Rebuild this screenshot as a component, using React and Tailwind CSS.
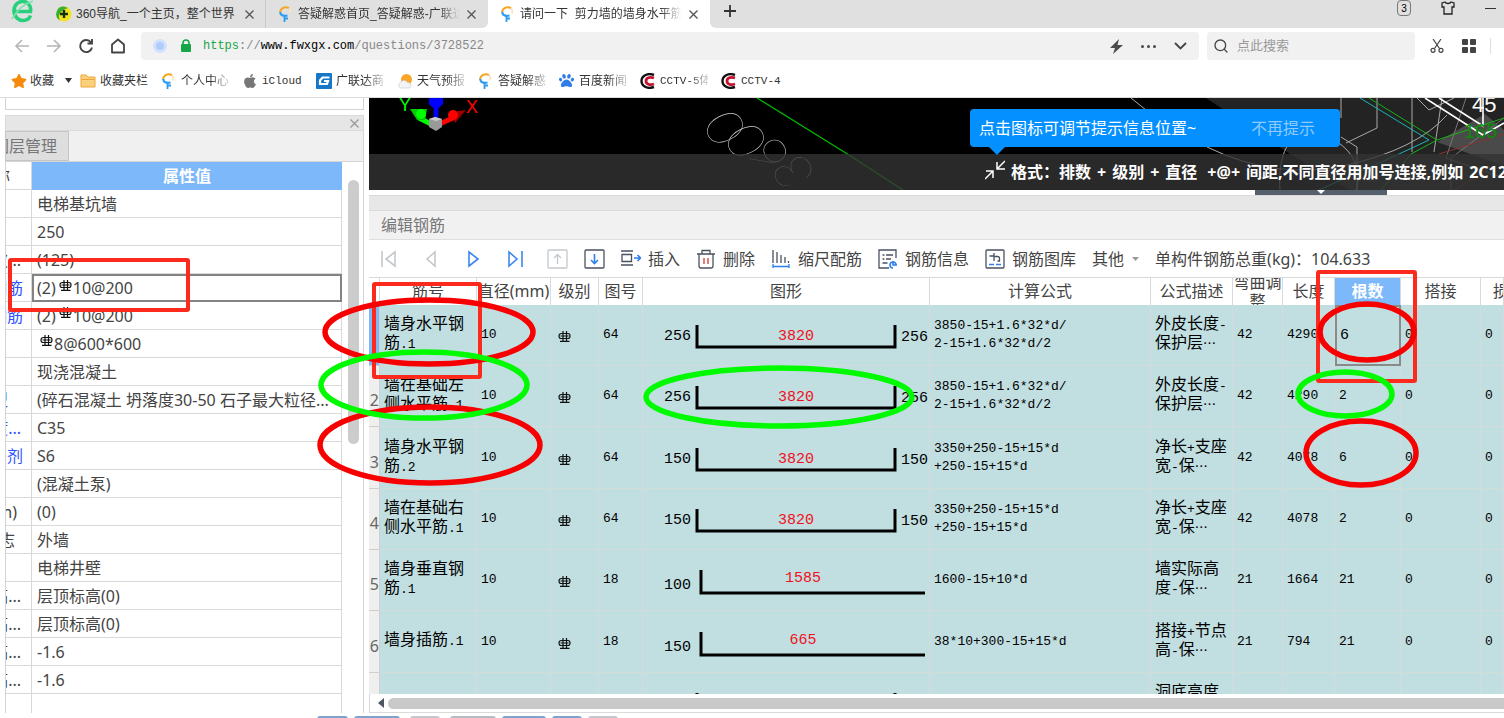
/**
 * Browser window with a rebar editing workspace: property panel on the left,
 * 3D view and rebar table on the right, review marks drawn on top.
 */
import { Search } from 'lucide-react';
import { FaApple, FaPaw, FaStar } from 'react-icons/fa';

const PROPS = [
  { value: '电梯基坑墙' },
  { value: '250' },
  { label: '皮...', pad: 'pr-[10px]', value: '(125)' },
  { label: '钢筋', pad: 'pr-[8px]', blue: true, prefix: '(2)', value: '10@200', rebar: true, selected: true },
  { label: '钢筋', pad: 'pr-[8px]', blue: true, prefix: '(2)', value: '10@200', rebar: true },
  { prefix: '', value: '8@600*600', rebar: true },
  { value: '现浇混凝土' },
  { label: '类型', pad: 'pr-[23px]', blue: true, value: '(碎石混凝土 坍落度30-50 石子最大粒径...' },
  { label: '度...', pad: 'pr-[10px]', blue: true, value: 'C35' },
  { label: '加剂', pad: 'pr-[8px]', blue: true, value: 'S6' },
  { value: '(混凝土泵)' },
  { label: '(mm)', pad: 'pr-[14px]', value: '(0)' },
  { label: '标志', pad: 'pr-[16px]', value: '外墙' },
  { value: '电梯井壁' },
  { label: '高...', pad: 'pr-[10px]', value: '层顶标高(0)' },
  { label: '高...', pad: 'pr-[10px]', value: '层顶标高(0)' },
  { label: '高...', pad: 'pr-[10px]', value: '-1.6' },
  { label: '高...', pad: 'pr-[10px]', value: '-1.6' },
];

const BARS = [
  { name: ['墙身水平钢', '筋.1'], fig: 64, side: 256, len: 3820, formula: ['3850-15+1.6*32*d/', '2-15+1.6*32*d/2'], desc: ['外皮长度-', '保护层…'], bend: 42, total: 4290, count: 6 },
  { name: ['墙在基础左', '侧水平筋.1'], fig: 64, side: 256, len: 3820, formula: ['3850-15+1.6*32*d/', '2-15+1.6*32*d/2'], desc: ['外皮长度-', '保护层…'], bend: 42, total: 4290, count: 2 },
  { name: ['墙身水平钢', '筋.2'], fig: 64, side: 150, len: 3820, formula: ['3350+250-15+15*d', '+250-15+15*d'], desc: ['净长+支座', '宽-保…'], bend: 42, total: 4078, count: 6 },
  { name: ['墙在基础右', '侧水平筋.1'], fig: 64, side: 150, len: 3820, formula: ['3350+250-15+15*d', '+250-15+15*d'], desc: ['净长+支座', '宽-保…'], bend: 42, total: 4078, count: 2 },
  { name: ['墙身垂直钢', '筋.1'], fig: 18, side: 100, len: 1585, formula: ['1600-15+10*d'], desc: ['墙实际高', '度-保…'], bend: 21, total: 1664, count: 21 },
  { name: ['墙身插筋.1'], fig: 18, side: 150, len: 665, formula: ['38*10+300-15+15*d'], desc: ['搭接+节点', '高-保…'], bend: 21, total: 794, count: 21 },
];

const HEADS = ['', '筋号', '直径(mm)', '级别', '图号', '图形', '计算公式', '公式描述', '弯曲调整', '长度', '根数', '搭接', '损耗'];
const COLS = ['w-[11px]', 'w-[97px]', 'w-[74px]', 'w-[48px]', 'w-[44px]', 'w-[287px]', 'w-[221px]', 'w-[82px]', 'w-[50px]', 'w-[52px]', 'w-[66px]', 'w-[80px]', 'w-auto'];

const BOOKMARKS = [
  { icon: 'folder', text: '收藏夹栏' },
  { icon: 'g', text: '个人中心', fade: true },
  { icon: 'apple', text: 'iCloud', narrow: true },
  { icon: 'gld', text: '广联达商', fade: true },
  { icon: 'weather', text: '天气预报', fade: true },
  { icon: 'g', text: '答疑解惑', fade: true },
  { icon: 'paw', text: '百度新闻', fade: true },
  { icon: 'cctv', text: 'CCTV-5体', fade: true },
  { icon: 'cctv', text: 'CCTV-4' },
];

const UI = "font-['Noto_Sans','Noto_Sans_CJK_SC',sans-serif]";
const SONG = "font-['Liberation_Sans','Noto_Sans_CJK_SC',sans-serif]";
const MONO = "font-['Liberation_Mono','Noto_Sans_CJK_SC',monospace]";

function GIcon() {
  return (
    <svg width="14" height="16" viewBox="0 0 14 16" fill="none" className="shrink-0">
      <path d="M11 2.200C7 -.2 2 2.500 2.200 6.500" stroke="#f5a623" strokeWidth="2" />
      <path d="M2.200 6C2.400 9 5 10.600 9.500 9.500" stroke="#2b9cf2" strokeWidth="2.200" />
      <path d="M11 2.200C13 4 12.500 6 12 7.500" stroke="#fbe3b8" strokeWidth="1.500" />
      <path d="M6.500 10v6M6.500 12.500h3.500" stroke="#2b9cf2" strokeWidth="1.800" />
    </svg>
  );
}

function BookmarkIcon({ kind }) {
  if (kind === 'g') return <GIcon />;
  if (kind === 'apple') return <FaApple size={16} color="#777" className="shrink-0" />;
  if (kind === 'paw') {
    return (
      <span className="relative flex">
        <FaPaw size={15} color="#2f7de9" />
      </span>
    );
  }
  if (kind === 'folder') {
    return (
      <svg width="16" height="16" viewBox="0 0 16 16" className="shrink-0">
        <path d="M1 2h5l2 2h7v10H1z" fill="#fbd07c" stroke="#eda637" />
        <path d="M1.500 6.500h13" stroke="#eda637" />
      </svg>
    );
  }
  if (kind === 'gld') {
    return (
      <svg width="16" height="16" viewBox="0 0 16 16" className="shrink-0">
        <rect width="16" height="16" rx="1" fill="#1677c9" />
        <path d="M13.500 4.500H6.500L4 7.500v3.500h7l1-3H8" fill="none" stroke="#fff" strokeWidth="2.200" />
      </svg>
    );
  }
  if (kind === 'weather') {
    return (
      <svg width="16" height="16" viewBox="0 0 16 16" className="shrink-0">
        <circle cx="9.500" cy="6.500" r="5.500" fill="#f9a62b" />
        <path d="M3.500 15a3 3 0 0 1 0-5.500 4 4 0 0 1 7 0 3 3 0 0 1 2 5.500z" fill="#f4f4f6" stroke="#c9ccd2" strokeWidth=".7" />
      </svg>
    );
  }
  return (
    <svg width="15" height="16" viewBox="0 0 15 16" fill="none" className="shrink-0">
      <path d="M14 2C7-.5 1.500 3 1.500 8s5.500 8.500 12.500 6" stroke="#111" strokeWidth="2.400" />
      <path d="M14 5C9.500 3.500 6 5 6 8s3.500 4.500 8 3" stroke="#c8102e" strokeWidth="2.800" />
    </svg>
  );
}

function CloseX({ size = 9, color = '#555' }) {
  return (
    <svg width={size} height={size} viewBox="0 0 9 9" className="shrink-0" stroke={color} strokeWidth="1.300">
      <path d="M.5.5l8 8M8.500.5l-8 8" />
    </svg>
  );
}

function Tab({ icon, title, active, rounded, fade }) {
  return (
    <div className={`flex w-[222px] shrink-0 items-center gap-1 pl-3 ${active ? 'bg-white' : 'bg-[#e0e0e0]'} ${rounded ? 'rounded-br-md' : 'border-r border-[#c9c9c9]'}`}>
      <span className="flex w-4 shrink-0">{icon}</span>
      <span className={`w-[165px] shrink-0 overflow-hidden text-xs whitespace-nowrap text-[#333] ${fade ? '[mask-image:linear-gradient(to_right,black_85%,transparent_98%)]' : ''}`}>{title}</span>
      <button aria-label="关闭标签" className="flex"><CloseX /></button>
    </div>
  );
}

function BrowserChrome() {
  return (
    <header className={`shrink-0 ${SONG}`}>
      <div className="flex h-7 overflow-hidden bg-white">
        <div className="w-11 shrink-0 bg-[#e0e0e0] pl-[11px]">
          <svg width="24" height="24" viewBox="0 0 24 24" fill="none">
            <path d="M3 11.500h16.500C20.500 5 16 1 11 1.500 5.500 2 2.500 6.500 3 12c.5 5 4.500 8.500 9 8.500 4 0 6.500-2 7.500-5" stroke="#27d07c" strokeWidth="3.600" />
            <path d="M1 19C5 12 12 4 22 1" stroke="#7be3ae" strokeWidth="1.500" />
          </svg>
        </div>
        <Tab
          title="360导航_一个主页，整个世界"
          icon={(
            <svg width="16" height="16" viewBox="0 0 16 16">
              <circle cx="8" cy="8" r="7.500" fill="#f7e31c" />
              <path d="M8 .5a7.500 7.500 0 0 0-4 14C1 9 5 4 12 2z" fill="#3aae2f" />
              <path d="M8 4v8M4 8h8" stroke="#11330f" strokeWidth="2.400" />
            </svg>
          )}
        />
        <Tab title="答疑解惑首页_答疑解惑-广联达" icon={<GIcon />} rounded fade />
        <Tab title={'请问一下\u00a0\u00a0剪力墙的墙身水平筋'} icon={<GIcon />} active rounded fade />
        <div className="flex flex-1 items-start rounded-bl-md bg-[#e0e0e0] pl-[14px]">
          <button aria-label="新标签" className="mt-[5px]">
            <svg width="12" height="12" viewBox="0 0 12 12" stroke="#333" strokeWidth="1.800"><path d="M6 0v12M0 6h12" /></svg>
          </button>
          <div className="ml-auto flex items-start gap-[30px] pr-2">
            <button className="flex h-4 w-[14px] items-center justify-center rounded-sm border border-[#777] text-[10px] text-black">3</button>
            <button aria-label="皮肤" className="mt-px">
              <svg width="14" height="14" viewBox="0 0 14 14" fill="none" stroke="#222" strokeWidth="1.300"><path d="M4 1L1 2v4h2v7h8V6h2V2l-3-1c-1 2-5 2-6 0z" /></svg>
            </button>
            <button aria-label="最小化" className="mt-2 h-px w-[11px] bg-[#333]" />
          </div>
        </div>
      </div>

      <div className="flex h-9 items-center bg-white pl-[14px]">
        <div className="flex w-[127px] shrink-0 items-center gap-4">
          <button aria-label="后退">
            <svg width="16" height="14" viewBox="0 0 16 14" fill="none" stroke="#b5b5b5" strokeWidth="1.600"><path d="M15 7H2M8 1L2 7l6 6" /></svg>
          </button>
          <button aria-label="前进">
            <svg width="16" height="14" viewBox="0 0 16 14" fill="none" stroke="#b5b5b5" strokeWidth="1.600"><path d="M1 7h13M8 1l6 6-6 6" /></svg>
          </button>
          <button aria-label="刷新">
            <svg width="16" height="16" viewBox="0 0 16 16" fill="none" stroke="#444" strokeWidth="1.900"><path d="M13 4.500A6 6 0 1 0 14 9.500M14 1v4.500H9.500" /></svg>
          </button>
          <button aria-label="主页">
            <svg width="16" height="16" viewBox="0 0 16 16" fill="none" stroke="#444" strokeWidth="1.800"><path d="M2 14.500V6.500L8 1.500l6 5v8z" strokeLinejoin="round" /></svg>
          </button>
        </div>
        <div className="flex h-7 min-w-0 flex-1 items-center rounded bg-[#f1f1f1] pr-3 pl-3">
          <span className="h-[14px] w-[14px] rounded-full border-[3px] border-[#d3e1fd] bg-[#b3cbfb]" />
          <svg width="12" height="14" viewBox="0 0 12 14" className="ml-[13px]">
            <rect x="1" y="5" width="10" height="8" rx="1" fill="#15a745" />
            <path d="M3 6V4a3 3 0 0 1 6 0v2" fill="none" stroke="#15a745" strokeWidth="1.600" />
          </svg>
          <span className={`ml-[11px] text-xs whitespace-nowrap text-[#888] ${MONO}`}>
            <span className="text-[#1ba64a]">https</span>://<span className="text-black">www.fwxgx.com</span>/questions/3728522
          </span>
          <div className="ml-auto flex items-center gap-[18px]">
            <button aria-label="极速模式">
              <svg width="13" height="15" viewBox="0 0 13 15" fill="#4a4a4a"><path d="M9 0L0 9h5l-2 6 10-9H7.500z" /></svg>
            </button>
            <button aria-label="更多" className="flex gap-[3px]">
              <i className="h-[3px] w-[3px] rounded-full bg-[#4a4a4a]" />
              <i className="h-[3px] w-[3px] rounded-full bg-[#4a4a4a]" />
              <i className="h-[3px] w-[3px] rounded-full bg-[#4a4a4a]" />
            </button>
            <button aria-label="展开">
              <svg width="13" height="8" viewBox="0 0 13 8" fill="none" stroke="#444" strokeWidth="1.800"><path d="M1 1l5.500 5.500L12 1" /></svg>
            </button>
          </div>
        </div>
        <label className="ml-2 flex h-7 w-[208px] shrink-0 items-center gap-2 rounded bg-[#f1f1f1] px-[6px]">
          <Search size={16} color="#444" strokeWidth={2} className="shrink-0" />
          <input aria-label="搜索" placeholder="点此搜索" className="w-full min-w-0 bg-transparent text-[13px] outline-none placeholder:text-[#999]" />
        </label>
        <div className="flex w-[89px] shrink-0 items-center gap-[18px] pl-[15px]">
          <button aria-label="截图">
            <svg width="14" height="14" viewBox="0 0 14 14" fill="none" stroke="#444" strokeWidth="1.200">
              <path d="M3 0l6.500 9.500M11 0L4.500 9.500" /><circle cx="3" cy="11.300" r="2" /><circle cx="11" cy="11.300" r="2" />
            </svg>
          </button>
          <button aria-label="应用" className="grid grid-cols-2 gap-[2px]">
            <i className="h-[6px] w-[6px] rounded-[1px] bg-[#444]" /><i className="h-[6px] w-[6px] rounded-[1px] bg-[#444]" />
            <i className="h-[6px] w-[6px] rounded-[1px] bg-[#444]" /><i className="h-[6px] w-[6px] rounded-[1px] bg-[#444]" />
          </button>
          <span className="-ml-1 h-4 w-px bg-[#ddd]" />
        </div>
      </div>

      <nav className="flex h-[34px] items-center border-b border-[#dcdcdc] bg-white pl-[11px] text-xs text-[#333]">
        <button className="flex w-[69px] shrink-0 items-center">
          <FaStar size={16} color="#f58a0b" />
          <span className="ml-[3px]">收藏</span>
          <svg width="7" height="5" viewBox="0 0 7 5" className="ml-[11px]"><path d="M0 0h7L3.500 5z" fill="#333" /></svg>
        </button>
        {BOOKMARKS.map((b, i) => (
          <a key={i} href="#bookmark" className={`flex shrink-0 items-center gap-1 ${b.narrow ? 'w-[74px]' : 'w-[81px]'}`}>
            <span className="flex w-4 shrink-0"><BookmarkIcon kind={b.icon} /></span>
            <span className={`w-12 overflow-hidden whitespace-nowrap ${/^[iC]/.test(b.text) ? `text-[11px] leading-4 ${MONO}` : ''} ${b.fade ? '[mask-image:linear-gradient(to_right,black_60%,transparent_110%)]' : ''}`}>{b.text}</span>
          </a>
        ))}
      </nav>
    </header>
  );
}

// Grade symbol: a ring crossed by two bars over a base line
function RebarMark({ className }) {
  return (
    <svg width="13" height="12" viewBox="0 0 13 12" fill="none" stroke="#111" strokeWidth="1.200" className={className}>
      <path d="M3.500 2.500H10q2 0 2 2.500t-2 2.500H3Q1 7.500 1 5t2.500-2.500M5 0v11M8.500 0v11M2 10.400h9.500M2.500 5h8" />
    </svg>
  );
}

function PropertyPanel() {
  return (
    <aside className={`ml-[5px] flex w-[359px] shrink-0 flex-col overflow-hidden text-base text-[#444] ${UI}`}>
      <div className="h-3 shrink-0 border-r border-b border-l border-[#d4d4d4]" />
      <div className="mt-[5px] flex h-4 shrink-0 items-center justify-end border border-[#dadada] bg-[#e6e6e6] pr-1">
        <button aria-label="关闭面板"><CloseX color="#999" /></button>
      </div>
      <div className="flex h-[31px] shrink-0 border-r border-b border-[#d4d4d4] bg-[#f0f0f0]">
        <button className="flex w-16 items-center justify-end overflow-hidden border border-[#c6c6c6] bg-[#dedede] pr-[11px] whitespace-nowrap text-[#777]"><span className="shrink-0">图层管理</span></button>
      </div>
      <div className="flex flex-1 border-x border-b border-[#d4d4d4]">
        <table className="w-[336px] shrink-0 table-fixed border-separate border-spacing-0">
          <colgroup><col className="w-[26px]" /><col /></colgroup>
          <thead>
            <tr className="h-7">
              <th className="border-r border-b border-[#d9d9d9] p-0 font-normal">
                <div className="flex h-6 justify-end overflow-hidden pr-[21px] whitespace-nowrap"><span className="shrink-0">名称</span></div>
              </th>
              <th className="bg-[#7db8fb] p-0 font-bold text-white">属性值</th>
            </tr>
          </thead>
          <tbody>
            {PROPS.map((p, i) => (
              <tr key={i} className="h-7">
                <td className="border-r border-b border-[#d9d9d9] p-0">
                  <div className={`flex h-6 justify-end overflow-hidden whitespace-nowrap ${p.pad ?? ''} ${p.blue ? 'text-[#2b50ff]' : ''}`}><span className="shrink-0">{p.label}</span></div>
                </td>
                <td className={`p-0 whitespace-nowrap ${p.selected ? 'border-2 border-[#838383]' : 'border-r border-b border-[#d9d9d9]'}`}>
                  <div className={`flex h-6 items-center ${p.selected ? 'pl-[3px]' : 'pl-[5px]'}`}>
                    {p.prefix}
                    {p.rebar && <RebarMark className="mr-px mb-[5px] ml-[3px]" />}
                    {p.value}
                  </div>
                </td>
              </tr>
            ))}
            <tr className="h-[19px]">
              <td className="border-r border-[#d9d9d9] p-0" />
              <td className="border-r border-[#d9d9d9] p-0" />
            </tr>
          </tbody>
        </table>
        <div className="flex-1 pt-[18px] pl-[6px]">
          <div className="h-[264px] w-[11px] rounded-full bg-[#ccc]" />
        </div>
      </div>
    </aside>
  );
}

function ModelView() {
  return (
    <div className="relative h-[92px] shrink-0 overflow-hidden bg-black">
      <svg className="absolute inset-0 h-full w-full" fill="none">
        <path d="M837 0l84 56 60 36h154V0z" fill="#232323" />
        <path d="M1068 44l48-28 19 16v36z" fill="#4a4a4a" />
        {/* axis gizmo */}
        <path d="M66 28L50 20" stroke="#0f0" strokeWidth="5" />
        <path d="M66 28l18-8" stroke="red" strokeWidth="5" />
        <path d="M67 24V4" stroke="#00f" strokeWidth="5" />
        <path d="M41 11l17 0-2 11-8 0z" fill="#0c0" /><circle cx="52" cy="16" r="5" fill="#0f0" />
        <path d="M97 12l-15 2 4 11z" fill="#900" /><circle cx="84" cy="17" r="5" fill="red" />
        <path d="M60 0h14v6l-4 4h-6l-4-4z" fill="#00f" />
        <path d="M60 21l6-2 7 2v8l-6 4-7-4z" fill="#999" /><path d="M60 21l7 2 6-2-7-2z" fill="#ccc" />
        <text x="30" y="13" fill="#0f0" fontSize="18" fontFamily="Liberation Sans">Y</text>
        <text x="97" y="15" fill="red" fontSize="18" fontFamily="Liberation Sans">X</text>
        {/* beam edges and dimension */}
        <path d="M388 0l92 57 54 35" stroke="#0b0" strokeWidth="1.300" />
        <text x="447 422 400 379" y="79 62 48 35" rotate="243" fill="#ccc" fontSize="52" fontWeight="100" fontFamily="Lato">3600</text>
        <g stroke="#aaa">
          <path d="M762 0l20 16M838 49q70 34 140 18t100-50M972 0v20M1008 0v30l-31 15M911 92c-4-60 30-65 50-52 26 12 32 36 26 52M972 39l16 10v43M1043 0v54M1073 0l-8 54M1048 0l12 12 25-12" />
          <path d="M1097 0l-20 60 58 20M1082 92V60l53-40" stroke="#777" />
        </g>
        <path d="M991 0l69 42-30 14-80 36" stroke="#1cb5b5" />
        <path d="M1000 0l68 42-26 14-30 36M1135 20l-67 22" stroke="#18b018" />
        <path d="M1056 0l58 37 21-12M1070 0l44 28V0" stroke="#fff" strokeWidth="1.600" />
        <path d="M1070 56l65-20M1085 92l50-30" stroke="#833" />
        <text x="1103" y="14" fill="#fff" fontSize="22" fontFamily="Liberation Sans">45</text>
        <text x="1095" y="40" fill="#0a8a0a" fontSize="20" fontFamily="Liberation Sans">165</text>
      </svg>
      <div className="absolute inset-x-0 bottom-0 h-9 overflow-hidden bg-[#333]/80">
        <p className={`ml-[616px] flex h-9 items-center gap-[6px] text-base font-bold whitespace-nowrap text-white ${UI}`}>
          <svg width="20" height="20" viewBox="0 0 20 20" fill="none" stroke="#fff" strokeWidth="1.500" className="mb-1 shrink-0">
            <path d="M20 1l-8 8M12 2v7h8M0 19l8-8M1 11h7v7" />
          </svg>
          <span>格式：排数</span>
          <span>+</span>
          <span>级别</span>
          <span>+</span>
          <span>直径</span>
          <span className="ml-1">+@+</span>
          <span>间距,不同直径用加号连接,例如</span>
          <span>2C12@200</span>
        </p>
      </div>
      <div className={`absolute top-[11px] left-[601px] flex h-[38px] w-[370px] items-center justify-between rounded bg-[#0590ff] pr-[25px] pl-[9px] text-base text-white ${UI}`}>
        <span>点击图标可调节提示信息位置~</span>
        <button className="text-[#8dcbff]">不再提示</button>
        <span className="absolute top-[38px] left-[19px] h-2 w-4 bg-[#0590ff] [clip-path:polygon(0_0,100%_0,50%_100%)]" />
      </div>
    </div>
  );
}

function ToolButton({ label, children }) {
  return (
    <button className="flex shrink-0 items-center gap-[7px] whitespace-nowrap">
      <svg width="20" height="20" viewBox="0 0 20 20" fill="none" stroke="#4a5260" strokeWidth="1.300">{children}</svg>
      {label}
    </button>
  );
}

function NavButton({ label, color, d }) {
  return (
    <button aria-label={label} className="shrink-0">
      <svg width="16" height="18" viewBox="0 0 16 18" fill="none" stroke={color} strokeWidth="1.600"><path d={d} /></svg>
    </button>
  );
}

function Toolbar() {
  return (
    <div className={`flex h-[38px] shrink-0 items-center gap-4 overflow-hidden border-b border-[#dadada] bg-white pl-3 text-base whitespace-nowrap text-[#444] ${UI}`}>
      <div className="mr-2 flex gap-[26px]">
        <NavButton label="首条" color="#c4c8cd" d="M1 1v16M14 2v14L5 9z" />
        <NavButton label="上一条" color="#c4c8cd" d="M12 2v14L4 9z" />
        <NavButton label="下一条" color="#3b86f0" d="M4 2v14l9-7z" />
        <NavButton label="末条" color="#3b86f0" d="M15 1v16M2 2v14l8-7z" />
      </div>
      <button aria-label="上移" className="shrink-0">
        <svg width="21" height="20" viewBox="0 0 21 20" fill="none" stroke="#c4c8cd" strokeWidth="1.300"><rect x="1" y="1" width="19" height="18" rx="1" /><path d="M10.500 15V6M7 9l3.500-3.500L14 9" /></svg>
      </button>
      <button aria-label="下移" className="shrink-0">
        <svg width="21" height="20" viewBox="0 0 21 20" fill="none" stroke="#4a5260" strokeWidth="1.300"><rect x="1" y="1" width="19" height="18" rx="1" /><path d="M10.500 5v9M7 11l3.500 3.500L14 11" stroke="#2f7fee" strokeWidth="1.600" /></svg>
      </button>
      <ToolButton label="插入">
        <path d="M0 2h12M0 16h12M1 5.500h9.500v7H1z" /><path d="M13 9h6M16.500 6l3 3-3 3" stroke="#2f7fee" strokeWidth="1.600" />
      </ToolButton>
      <ToolButton label="删除">
        <path d="M1 5h18M6 5V1.500h8V5M3 5v12q0 2 2 2h10q2 0 2-2V5" /><path d="M8 9v6M12 9v6" stroke="#d33" />
      </ToolButton>
      <ToolButton label="缩尺配筋">
        <path d="M2 1v13M6 3v11M10 6v8M14 8v6M17.500 12v2" /><path d="M2 17.500h16M2 15v4M18 15v4" stroke="#2f7fee" />
      </ToolButton>
      <ToolButton label="钢筋信息">
        <path d="M18 9V1H1v18h10M4.500 6h2M8 6h7M4.500 10h2M8 10h5M4.500 14h5" /><path d="M15 19a3 3 0 1 1 3-3M15 12v4h4" stroke="#2f7fee" strokeWidth="1.600" />
      </ToolButton>
      <ToolButton label="钢筋图库">
        <rect x="1" y="1" width="18" height="18" rx="1" /><path d="M4.500 7H9V4M9 4v8M9 7.500h3.500q2 0 2 2V12h-2" /><path d="M4 15.500h5M11 15.500h5" stroke="#2f7fee" />
      </ToolButton>
      <button className="flex shrink-0 items-center gap-2">
        其他
        <svg width="7" height="4" viewBox="0 0 7 4"><path d="M0 0h7L3.500 4z" fill="#999" /></svg>
      </button>
      <span>单构件钢筋总重(kg)：104.633</span>
    </div>
  );
}

// Latin runs sit narrower than the Chinese characters around them
function Mixed({ lines }) {
  return lines.map((line) => (
    <div key={line}>
      {line.split(/([\u4e00-\u9fff]+)/).filter(Boolean).map((part, i) => (
        <span key={i} className={/[\u4e00-\u9fff]/.test(part) ? 'text-base leading-[18px]' : 'text-[13px] leading-[18px]'}>{part.replace('…', '⋯')}</span>
      ))}
    </div>
  ));
}

function BarShape({ bar }) {
  const hooked = bar.fig === 64;
  return (
    <svg width="286" height="60" viewBox="0 0 286 60" className="block" fontFamily="Liberation Mono" fontSize="15">
      <path d={hooked ? 'M54 20v22h198V20' : 'M58 20v23h224'} fill="none" stroke="#000" strokeWidth="3" />
      <text x="48" y={hooked ? 35 : 39} textAnchor="end">{bar.side}</text>
      <text x={hooked ? 153 : 160} y={hooked ? 35 : 32} textAnchor="middle" fill="#f01020">{bar.len}</text>
      {hooked && <text x="258" y="36">{bar.side}</text>}
    </svg>
  );
}

function BarTable() {
  const cell = 'border-r border-b border-[#d2dddb] p-0 pl-1';
  return (
    <div className="h-[416px] shrink-0 overflow-hidden">
      <table className="w-full table-fixed border-separate border-spacing-0">
        <colgroup>{COLS.map((c, i) => <col key={i} className={c} />)}</colgroup>
        <thead>
          <tr className={`h-[27px] text-base text-[#444] ${UI}`}>
            {HEADS.map((h) => (
              <th key={h} className={`border-r border-[#dadada] p-0 ${h === '根数' ? 'bg-[#7db8fb] font-bold text-white' : 'bg-white font-normal'}`}>
                <div className={`flex h-[27px] items-center overflow-hidden text-center leading-[19px] ${h === '弯曲调整' ? '' : 'whitespace-nowrap'} ${h === '损耗' ? 'justify-start pl-3' : 'justify-center'}`}>{h}</div>
              </th>
            ))}
          </tr>
        </thead>
        <tbody className={`bg-[#c1dee1] text-[13px] leading-[18px] text-black ${MONO}`}>
          {BARS.map((bar, i) => (
            <tr key={i} className={i % 3 === 2 ? 'h-[62px]' : 'h-[61px]'}>
              <th className={`border-r border-b border-[#cfcfcf] p-0 pt-2 text-right text-base font-normal text-[#666] ${UI} ${i === 0 ? 'bg-[#7db8fb]' : 'bg-[#efefef]'}`}>{i > 0 && i + 1}</th>
              <td className={`${cell} whitespace-nowrap`}><Mixed lines={bar.name} /></td>
              <td className={cell}>10</td>
              <td className={`${cell} pt-1`}><RebarMark className="ml-[3px]" /></td>
              <td className={cell}>{bar.fig}</td>
              <td className="border-r border-b border-[#d2dddb] p-0"><BarShape bar={bar} /></td>
              <td className={cell}>{bar.formula.map((f) => <div key={f}>{f}</div>)}</td>
              <td className={`${cell} whitespace-nowrap`}><Mixed lines={bar.desc} /></td>
              <td className={cell}>{bar.bend}</td>
              <td className={cell}>{bar.total}</td>
              <td className={i === 0 ? 'border-2 border-[#8a8a8a] p-0 pl-[3px] text-[15px]' : cell}>{bar.count}</td>
              <td className={cell}>0</td>
              <td className={cell}>0</td>
            </tr>
          ))}
          <tr className="h-[61px]">
            <th className="border-r border-[#cfcfcf] bg-[#efefef] p-0" />
            <td className={cell} /><td className={cell} /><td className={cell} /><td className={cell} />
            <td className="border-r border-[#d2dddb] p-0">
              <svg width="286" height="60" className="block"><path d="M54 19v23h198V19" fill="none" stroke="#000" strokeWidth="3" /></svg>
            </td>
            <td className={cell} />
            <td className={`${cell} whitespace-nowrap`}><Mixed lines={['洞底高度', '-保…']} /></td>
            <td className={cell} /><td className={cell} /><td className={cell} /><td className={cell} /><td className={cell} />
          </tr>
        </tbody>
      </table>
    </div>
  );
}

// Review marks circled over the workspace, in workspace coordinates
function Marks() {
  return (
    <svg className="pointer-events-none absolute inset-0 h-full w-full" fill="none">
      <g stroke="#fb2a1c" strokeWidth="4">
        <rect x="10" y="162" width="178" height="50" rx="1" />
        <rect x="374" y="186" width="106" height="93" rx="1" />
        <rect x="1318" y="174" width="97" height="109" rx="1" />
      </g>
      <g stroke="#f60000" strokeWidth="5.500">
        <ellipse cx="429" cy="234" rx="104" ry="32" />
        <ellipse cx="430" cy="347" rx="110" ry="38" />
        <ellipse cx="1367" cy="234" rx="47" ry="28" />
        <ellipse cx="1361" cy="355" rx="55" ry="32" />
      </g>
      <g stroke="#00fb00" strokeWidth="5.500">
        <ellipse cx="424" cy="287" rx="103" ry="33" />
        <ellipse cx="779" cy="299" rx="133" ry="29" />
        <ellipse cx="1345" cy="296" rx="47" ry="22" />
      </g>
    </svg>
  );
}

export default function App() {
  return (
    <div className="flex h-screen flex-col overflow-hidden bg-white">
      <BrowserChrome />
      <div className="relative flex min-h-0 flex-1 flex-col overflow-hidden">
        <div className="flex h-[615px] shrink-0">
          <PropertyPanel />
          <main className="ml-[5px] flex min-w-0 flex-1 flex-col">
            <ModelView />
            <div className="flex h-[5px] shrink-0 justify-end bg-white">
              <div className="mr-[117px] flex w-[132px] justify-center bg-[#56606d]">
                <span className="h-1 w-2 bg-white [clip-path:polygon(0_0,100%_0,50%_100%)]" />
              </div>
            </div>
            <div className="h-4 shrink-0 border-y border-[#d9d9d9] bg-[#e7e7e7]" />
            <h2 className={`flex h-[29px] shrink-0 items-center border-b border-[#dedede] bg-[#f1f1f1] pl-3 text-base text-[#777] ${UI}`}>编辑钢筋</h2>
            <Toolbar />
            <BarTable />
            <div className="flex flex-1 items-center gap-1 border-b border-l border-[#dadada] bg-white pl-2">
              <svg width="6" height="10" viewBox="0 0 6 10" className="shrink-0"><path d="M6 0v10L0 5z" fill="#4d5560" /></svg>
              <div className="h-[11px] flex-1 rounded-l-full bg-[#c9c9c9]" />
            </div>
          </main>
        </div>
        <div className="mt-[3px] ml-[317px] flex h-[3px] shrink-0 gap-[6px]">
          <i className="w-[31px] rounded-t bg-[#7fa3cf]" />
          <i className="w-[46px] rounded-t bg-[#7fa3cf]" />
          <i className="mx-1 w-[30px] rounded-t bg-[#c4c8cc]" />
          <i className="w-[46px] rounded-t bg-[#b5bcc4]" />
          <i className="w-[44px] rounded-t bg-[#7fa3cf]" />
          <i className="w-[30px] rounded-t bg-[#7fa3cf]" />
          <i className="w-[30px] rounded-t bg-[#c4c8cc]" />
        </div>
        <Marks />
      </div>
    </div>
  );
}
